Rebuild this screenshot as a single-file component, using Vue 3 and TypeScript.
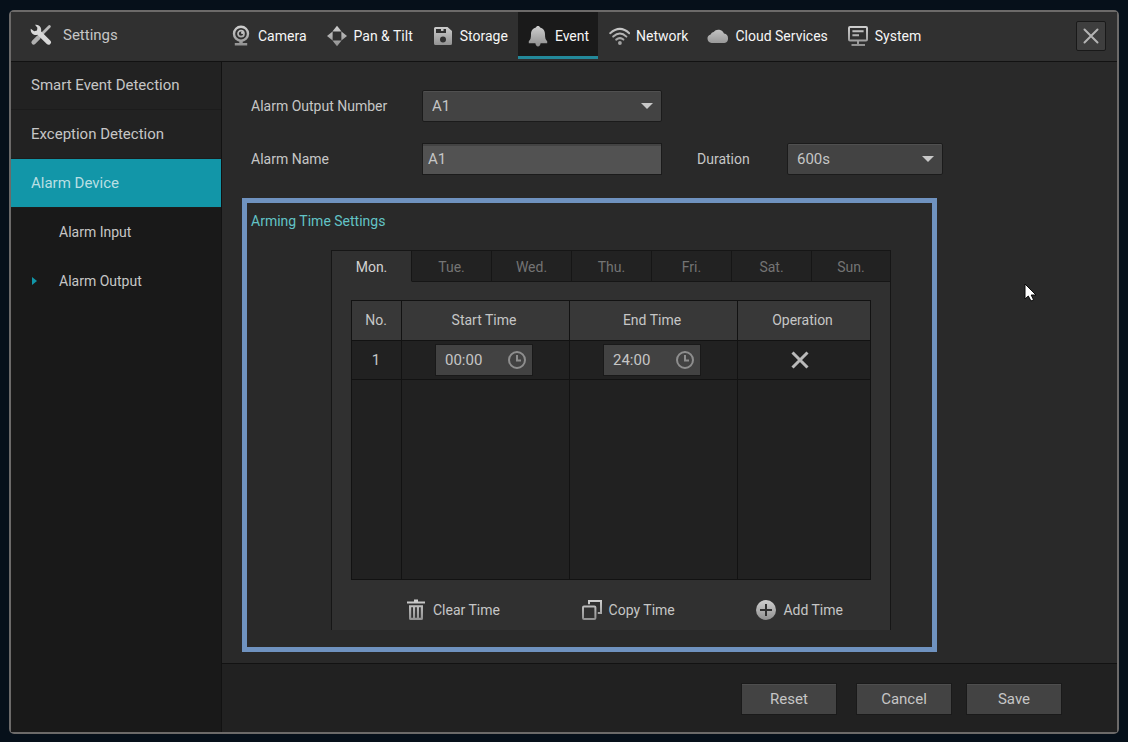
<script setup lang="ts">
import { ref } from 'vue'

const navItems = [
  { id: 'camera', label: 'Camera' },
  { id: 'pan', label: 'Pan & Tilt' },
  { id: 'storage', label: 'Storage' },
  { id: 'event', label: 'Event' },
  { id: 'network', label: 'Network' },
  { id: 'cloud', label: 'Cloud Services' },
  { id: 'system', label: 'System' },
]
const activeNav = ref('event')

const days = ['Mon.', 'Tue.', 'Wed.', 'Thu.', 'Fri.', 'Sat.', 'Sun.']
const activeDay = ref('Mon.')

const outputNumber = ref('A1')
const alarmName = ref('A1')
const duration = ref('600s')

interface Period {
  start: string
  end: string
}
const periods = ref<Period[]>([{ start: '00:00', end: '24:00' }])

function addTime(): void {
  if (periods.value.length < 6) periods.value.push({ start: '00:00', end: '24:00' })
}
function clearTime(): void {
  periods.value = []
}
function removeTime(index: number): void {
  periods.value.splice(index, 1)
}
</script>

<template>
  <div class="screen">
    <svg class="defs" width="0" height="0" aria-hidden="true">
      <defs>
        <linearGradient id="metal" gradientUnits="userSpaceOnUse" x1="0" y1="0" x2="0" y2="22">
          <stop offset="0" stop-color="#d2d2d2" />
          <stop offset="1" stop-color="#8c8c8c" />
        </linearGradient>
      </defs>
    </svg>
    <div class="window">
      <header class="topbar">
        <div class="brand">
          <svg width="22" height="22" viewBox="0 0 22 22" aria-hidden="true">
            <path d="M19.4 2.6 L10.5 11.5" stroke="#b8b8b8" stroke-width="2.8" stroke-linecap="round" />
            <path d="M8.6 13.4 L3.6 18.4" stroke="#b0b0b0" stroke-width="4.4" stroke-linecap="round" />
            <path
              d="M5 0.8 A5.2 5.2 0 0 1 11 7.2 L20.2 16.4 A2.4 2.4 0 0 1 16.8 20 L7.4 10.8 A5.2 5.2 0 0 1 0.8 4.8 L4.2 7.2 L7 6.6 L7.4 3.8 Z"
              fill="#d8d8d8"
            />
          </svg>
          <h1>Settings</h1>
        </div>
        <nav class="nav" aria-label="Sections">
          <button
            v-for="item in navItems"
            :key="item.id"
            type="button"
            class="nav-item"
            :class="{ active: item.id === activeNav }"
            @click="activeNav = item.id"
          >
            <svg width="22" height="22" viewBox="0 0 22 22" fill="none" aria-hidden="true">
              <g v-if="item.id === 'camera'">
                <circle cx="11" cy="8.7" r="7" stroke="url(#metal)" stroke-width="2.4" />
                <circle cx="11" cy="8.7" r="3" stroke="url(#metal)" stroke-width="1.7" />
                <circle cx="12.2" cy="7.8" r="1.2" fill="#c4c4c4" />
                <path d="M9.3 15 H12.7 V18 H17.2 V20.6 H4.8 V18 H9.3 Z" fill="url(#metal)" />
              </g>
              <g v-else-if="item.id === 'pan'" fill="url(#metal)">
                <path d="M11 0.8 L15.6 6.6 H6.4 Z" />
                <path d="M11 21.2 L15.6 15.4 H6.4 Z" />
                <path d="M1 11 L6.6 6.4 V15.6 Z" />
                <path d="M21 11 L15.4 6.4 V15.6 Z" />
              </g>
              <path
                v-else-if="item.id === 'storage'"
                fill="url(#metal)" fill-rule="evenodd"
                d="M3.5 2 H15.5 L20 6 V18.5 A1.5 1.5 0 0 1 18.5 20 H3.5 A1.5 1.5 0 0 1 2 18.5 V3.5 A1.5 1.5 0 0 1 3.5 2 Z M4 4 V8 H14 V4 H11.5 V6 H9 V4 Z M11 11.6 A3 3 0 1 0 11 17.6 A3 3 0 1 0 11 11.6 Z"
              />
              <g v-else-if="item.id === 'event'" fill="url(#metal)">
                <path d="M11 1 C12.1 1 12.9 1.6 13.1 2.5 C16.6 3.4 18 6 18 9.2 C18 13 18.6 14.8 20.2 16.2 V18.2 H1.8 V16.2 C3.4 14.8 4 13 4 9.2 C4 6 5.4 3.4 8.9 2.5 C9.1 1.6 9.9 1 11 1 Z" />
                <path d="M8.4 18 H13.6 C13.4 20.2 12.4 21.4 11 21.4 C9.6 21.4 8.6 20.2 8.4 18 Z" />
              </g>
              <g v-else-if="item.id === 'network'">
                <g stroke="url(#metal)" stroke-width="2" stroke-linecap="round">
                  <path d="M2.2 8.2 Q12 -0.4 21.2 8.2" />
                  <path d="M5.2 11.6 Q12 5.4 18.4 11.6" />
                  <path d="M8.2 14.6 Q12 11.6 15.4 14.6" />
                </g>
                <circle cx="11.9" cy="18" r="1.9" fill="#a2a2a2" />
              </g>
              <path
                v-else-if="item.id === 'cloud'"
                fill="url(#metal)"
                d="M4.6 18 A4.4 4.4 0 0 1 3.6 9.4 A4.2 4.2 0 0 1 6.6 7 A6 6 0 0 1 17 8.6 A4.8 4.8 0 0 1 17.4 18 Z"
              />
              <g v-else stroke="url(#metal)">
                <rect x="2" y="2" width="18" height="13.6" rx="1" stroke-width="2" />
                <path d="M5.4 6.2 H16.6 M5.4 10.2 H12" stroke-width="2" />
                <path d="M11 15.6 V19 M4.5 19.9 H18" stroke-width="2" />
              </g>
            </svg>
            <span>{{ item.label }}</span>
          </button>
        </nav>
        <button type="button" class="close" aria-label="Close">
          <svg width="16" height="16" viewBox="0 0 16 16" aria-hidden="true">
            <path d="M1.5 1.5 L14.5 14.5 M14.5 1.5 L1.5 14.5" stroke="#b4b4b4" stroke-width="2" stroke-linecap="round" />
          </svg>
        </button>
      </header>

      <div class="body">
        <nav class="sidebar" aria-label="Event settings">
          <a href="#smart">Smart Event Detection</a>
          <a href="#exception">Exception Detection</a>
          <a href="#device" class="selected">Alarm Device</a>
          <a href="#input" class="sub">Alarm Input</a>
          <a href="#output" class="sub current" aria-current="page">
            <svg width="5" height="8" viewBox="0 0 5 8" aria-hidden="true"><path d="M0 0 L5 4 L0 8 Z" fill="#1296a8" /></svg>
            Alarm Output
          </a>
        </nav>

        <div class="content">
          <main class="main">
            <form class="fields" @submit.prevent>
              <label for="output-number">Alarm Output Number</label>
              <div class="select">
                <select id="output-number" v-model="outputNumber">
                  <option>A1</option>
                </select>
                <svg width="12" height="6" viewBox="0 0 12 6" aria-hidden="true"><path d="M0 0 H12 L6 6 Z" fill="#c8c8c8" /></svg>
              </div>
              <label for="alarm-name" class="first">Alarm Name</label>
              <input id="alarm-name" v-model="alarmName" class="text" type="text" />
              <label for="duration" class="second">Duration</label>
              <div class="select">
                <select id="duration" v-model="duration">
                  <option>600s</option>
                </select>
                <svg width="12" height="6" viewBox="0 0 12 6" aria-hidden="true"><path d="M0 0 H12 L6 6 Z" fill="#c8c8c8" /></svg>
              </div>
            </form>

            <section class="arming">
              <h2>Arming Time Settings</h2>
              <div class="panel">
                <div class="days" role="tablist">
                  <button
                    v-for="day in days"
                    :key="day"
                    type="button"
                    role="tab"
                    :aria-selected="day === activeDay"
                    :class="{ on: day === activeDay }"
                    @click="activeDay = day"
                  >{{ day }}</button>
                </div>
                <div class="schedule">
                  <table>
                    <colgroup>
                      <col class="c-no" /><col class="c-time" /><col class="c-time" /><col />
                    </colgroup>
                    <thead>
                      <tr><th>No.</th><th>Start Time</th><th>End Time</th><th>Operation</th></tr>
                    </thead>
                    <tbody>
                      <tr v-for="(period, index) in periods" :key="index" class="entry">
                        <td>{{ index + 1 }}</td>
                        <td v-for="field in (['start', 'end'] as const)" :key="field">
                          <label class="time">
                            <input v-model="period[field]" type="text" :aria-label="field + ' time'" />
                            <svg width="20" height="20" viewBox="0 0 20 20" fill="none" stroke="#8e8e8e" stroke-width="2" aria-hidden="true">
                              <circle cx="10" cy="10" r="8" />
                              <path d="M10 5 V10.4 H14" />
                            </svg>
                          </label>
                        </td>
                        <td>
                          <button type="button" class="remove" aria-label="Delete" @click="removeTime(index)">
                            <svg width="18" height="18" viewBox="0 0 18 18" aria-hidden="true">
                              <path d="M1.5 1.5 L16.5 16.5 M16.5 1.5 L1.5 16.5" stroke="#bababa" stroke-width="3" />
                            </svg>
                          </button>
                        </td>
                      </tr>
                      <tr class="rest"><td /><td /><td /><td /></tr>
                    </tbody>
                  </table>
                </div>
                <div class="actions">
                  <button type="button" @click="clearTime">
                    <svg width="20" height="22" viewBox="0 0 20 22" aria-hidden="true">
                      <path fill="url(#metal)" fill-rule="evenodd" d="M1 2.4 H8 V0.6 H12 V2.4 H19 V4.6 H1 Z M3 6.2 H17 V19.5 A1.5 1.5 0 0 1 15.5 21 H4.5 A1.5 1.5 0 0 1 3 19.5 Z M5.2 8.2 V18.8 H7 V8.2 Z M9.1 8.2 V18.8 H10.9 V8.2 Z M13 8.2 V18.8 H14.8 V8.2 Z" />
                    </svg>
                    Clear Time
                  </button>
                  <button type="button">
                    <svg width="20" height="22" viewBox="0 0 20 22" fill="none" stroke="url(#metal)" stroke-width="2" aria-hidden="true">
                      <rect x="1" y="7.6" width="12.4" height="12.4" rx="1" />
                      <path d="M7 5.2 V2 H19 V14 H15.8" />
                    </svg>
                    Copy Time
                  </button>
                  <button type="button" @click="addTime">
                    <svg width="20" height="22" viewBox="0 0 20 22" aria-hidden="true">
                      <circle cx="10" cy="11" r="10" fill="url(#metal)" />
                      <path d="M4 11 H16 M10 5 V17" stroke="#303030" stroke-width="2" />
                    </svg>
                    Add Time
                  </button>
                </div>
              </div>
            </section>
          </main>

          <footer class="footer">
            <button type="button">Reset</button>
            <button type="button">Cancel</button>
            <button type="button">Save</button>
          </footer>
        </div>
      </div>
    </div>

    <svg class="pointer" width="13" height="19" viewBox="0 0 13 19" aria-hidden="true">
      <path d="M1 1 V16 L4.3 13 L7 18 L9.6 16.8 L7.2 12 H12 Z" fill="#fff" stroke="#0a0a0a" stroke-width="1" />
    </svg>
  </div>
</template>

<style>
body {
  margin: 0;
  background: #06101a;
}
</style>

<style scoped>
* {
  box-sizing: border-box;
}
.screen {
  position: relative;
  display: flex;
  min-height: 100vh;
  padding: 10px 9px 8px;
  background: #06101a;
  color: #c6c6c6;
  font-family: Roboto, "Liberation Sans", sans-serif;
  font-size: 15px;
  line-height: 18px;
}
.defs {
  position: absolute;
}
button,
input,
select {
  margin: 0;
  padding: 0;
  border: 0;
  border-radius: 0;
  background: none;
  color: inherit;
  font: inherit;
  outline: none;
}
svg {
  display: block;
  flex: none;
}
.window {
  display: flex;
  flex: 1;
  flex-direction: column;
  border: 2px solid #6c6a69;
  border-radius: 5px;
  background: #292929;
}

.topbar {
  display: flex;
  height: 50px;
  border-bottom: 1px solid #121212;
  background: #303030;
}
.brand {
  display: flex;
  flex: none;
  align-items: center;
  width: 210px;
  padding: 0 0 3px 19px;
  gap: 11px;
}
h1 {
  margin: 0;
  font-size: 15px;
  font-weight: 400;
}
.nav {
  display: flex;
  flex: 1;
  gap: 1px;
}
.nav-item {
  display: flex;
  align-items: center;
  height: 47px;
  padding: 4px 9px 0;
  gap: 6px;
  border-bottom: 3px solid transparent;
  color: #f6f6f6;
  font-size: 14px;
  white-space: nowrap;
}
.nav-item.active {
  border-bottom-color: #23899a;
  background: #1a1a1a;
}
.close {
  display: flex;
  align-items: center;
  justify-content: center;
  width: 30px;
  height: 30px;
  margin: 9px 11px 0 0;
  border: 1px solid #191919;
  border-radius: 2px;
  background: #3e3e3e;
}

.body {
  display: flex;
  flex: 1;
}
.sidebar {
  flex: none;
  width: 211px;
  border-right: 1px solid #121212;
  background: #191919;
}
.sidebar a {
  display: flex;
  align-items: center;
  height: 49px;
  padding: 0 20px;
  border-bottom: 1px solid #1c1c1c;
  background: #222;
  color: inherit;
  text-decoration: none;
}
.sidebar a:first-child {
  height: 48px;
  padding-bottom: 2px;
}
.sidebar a.selected {
  background: #1296a8;
  color: #b9dfe3;
}
.sidebar a.sub {
  padding-left: 48px;
  border-bottom-color: #191919;
  background: #191919;
  font-size: 14px;
}
.sidebar a.current {
  padding-left: 21px;
  gap: 22px;
}

.content {
  display: flex;
  flex: 1;
  flex-direction: column;
}
.main {
  flex: 1;
  padding: 28px 20px 11px;
}
.fields {
  display: grid;
  grid-template-columns: 171px 240px 35px 90px 156px;
  align-items: center;
  row-gap: 21px;
  padding-left: 9px;
}
.fields label {
  font-size: 14px;
}
.fields .first {
  grid-column: 1;
}
.fields .second {
  grid-column: 4;
}
.select {
  position: relative;
}
.select select {
  display: block;
  width: 100%;
  height: 32px;
  padding: 0 30px 0 9px;
  border: 1px solid #1b1b1b;
  border-radius: 2px;
  background: #434343;
  appearance: none;
  box-shadow: inset 0 1px #505050;
}
.select svg {
  position: absolute;
  top: 13px;
  right: 9px;
  pointer-events: none;
}
.text {
  height: 32px;
  padding: 0 5px;
  border: 1px solid #1b1b1b;
  background: #525252;
  box-shadow: inset 0 2px #434343;
}

.arming {
  max-width: 695px;
  margin-top: 23px;
  padding: 9px 41px 17px 4px;
  border: 5px solid #6f92bf;
}
h2 {
  margin: 0;
  color: #62c3c6;
  font-size: 14px;
  font-weight: 400;
}
.panel {
  margin: 20px 0 0 80px;
  border: 1px solid #161616;
  border-bottom: 0;
  background: #303030;
}
.days {
  display: grid;
  grid-template-columns: repeat(6, 80px) 1fr;
}
.days button {
  height: 31px;
  padding-top: 2px;
  border-right: 1px solid #161616;
  border-bottom: 1px solid #161616;
  background: #222;
  color: #747474;
  font-size: 14px;
}
.days button:last-child {
  border-right: 0;
}
.days button.on {
  border-bottom-color: #303030;
  background: #303030;
  color: #d2d2d2;
}
.schedule {
  padding: 18px 19px 0;
}
table {
  width: 100%;
  border-collapse: collapse;
  table-layout: fixed;
  background: #212121;
}
.c-no {
  width: 50px;
}
.c-time {
  width: 168px;
}
th,
td {
  padding: 0 3px 0 0;
  border: 1px solid #121212;
  font-weight: 400;
  text-align: center;
}
th:first-child,
td:first-child {
  padding-right: 1px;
}
th {
  height: 40px;
  padding-bottom: 2px;
  background: #383838;
  font-size: 14px;
}
.entry td {
  height: 39px;
}
.rest td {
  height: 200px;
}
.time {
  display: inline-flex;
  align-items: center;
  width: 98px;
  height: 32px;
  padding: 0 5px 0 9px;
  border: 1px solid #191919;
  background: #424242;
  vertical-align: middle;
}
.time input {
  flex: 1;
  width: 20px;
}
.remove {
  display: flex;
  margin: 0 auto;
  padding-right: 6px;
}
.actions {
  display: flex;
  align-items: center;
  height: 50px;
  padding: 10px 47px 0 74px;
  justify-content: space-between;
}
.actions button {
  display: flex;
  align-items: center;
  gap: 7px;
  font-size: 14px;
}

.footer {
  display: flex;
  justify-content: flex-end;
  height: 69px;
  padding: 20px 56px 0;
  border-top: 1px solid #121212;
  background: #212121;
}
.footer button {
  width: 94px;
  height: 30px;
  margin-left: 16px;
  background: #434343;
  box-shadow: inset 0 1px #4e4e4e, 0 0 0 1px #1a1a1a;
}
.footer button:first-child {
  margin-right: 5px;
}

.pointer {
  position: absolute;
  top: 283px;
  left: 1024px;
  pointer-events: none;
}
</style>
